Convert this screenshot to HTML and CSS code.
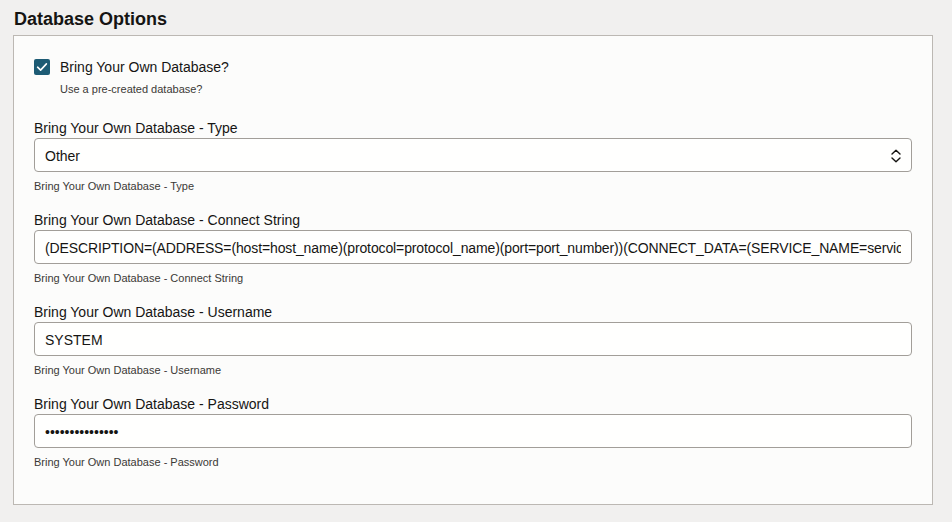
FILE: index.html
```html
<!DOCTYPE html>
<html lang="en">
<head>
<meta charset="utf-8">
<title>Database Options</title>
<link rel="stylesheet" href="styles.css">
</head>
<body>
<h2 class="title">Database Options</h2>
<div class="panel">
  <div class="check-row">
    <span class="checkbox">
      <svg width="16" height="16" viewBox="0 0 16 16"><path d="M3.6 8.2 L6.6 11.1 L12.4 4.9" fill="none" stroke="#fff" stroke-width="1.6" stroke-linecap="round" stroke-linejoin="round"/></svg>
    </span>
    <span class="check-label">Bring Your Own Database?</span>
  </div>
  <div class="check-help">Use a pre-created database?</div>

  <div class="field">
    <label class="field-label">Bring Your Own Database - Type</label>
    <div class="select">
      <span>Other</span>
      <svg class="chev" width="12" height="16" viewBox="0 0 12 16"><path d="M2 6 L6 2.2 L10 6 M2 10 L6 13.8 L10 10" fill="none" stroke="#161513" stroke-width="1.4" stroke-linecap="round" stroke-linejoin="round"/></svg>
    </div>
    <div class="help">Bring Your Own Database - Type</div>
  </div>

  <div class="field">
    <label class="field-label">Bring Your Own Database - Connect String</label>
    <input class="input tight" type="text" readonly value="(DESCRIPTION=(ADDRESS=(host=host_name)(protocol=protocol_name)(port=port_number))(CONNECT_DATA=(SERVICE_NAME=service_name)))">
    <div class="help">Bring Your Own Database - Connect String</div>
  </div>

  <div class="field">
    <label class="field-label">Bring Your Own Database - Username</label>
    <input class="input" type="text" readonly value="SYSTEM">
    <div class="help">Bring Your Own Database - Username</div>
  </div>

  <div class="field">
    <label class="field-label">Bring Your Own Database - Password</label>
    <input class="input" type="password" readonly value="xxxxxxxxxxxxxxx">
    <div class="help">Bring Your Own Database - Password</div>
  </div>
</div>
</body>
</html>
```
FILE: styles.css
```css
html, body {
  margin: 0;
  padding: 0;
  background: #f1f0ef;
  font-family: "Liberation Sans", Arial, sans-serif;
  color: #161513;
}
body {
  padding: 0 19px 0 13px;
}
.title {
  margin: 8px 0 5px 1px;
  font-size: 18px;
  line-height: 22px;
  font-weight: bold;
}
.panel {
  background: #fcfcfb;
  border: 1px solid #bcb8b3;
  padding: 21px 20px 35px 20px;
}
.check-row {
  display: flex;
  align-items: center;
  height: 20px;
  gap: 10px;
}
.checkbox {
  width: 16px;
  height: 16px;
  border-radius: 2px;
  background: #1d5b74;
  display: flex;
}
.check-label {
  font-size: 14px;
}
.check-help {
  margin: 5px 0 0 26px;
  font-size: 11px;
  line-height: 14px;
  color: #3b3936;
}
.field {
  margin-top: 24px;
}
.field + .field {
  margin-top: 19px;
}
.field-label {
  display: block;
  font-size: 14px;
  line-height: 17px;
  margin-bottom: 1px;
}
.select, .input {
  box-sizing: border-box;
  width: 100%;
  height: 34px;
  border: 1px solid #a29e99;
  border-radius: 4px;
  background: #fffffe;
  font-family: "Liberation Sans", Arial, sans-serif;
  font-size: 14px;
  color: #161513;
  padding: 1px 10px 0 10px;
  display: flex;
  align-items: center;
  outline: none;
}
.tight {
  letter-spacing: -0.12px;
}
.select {
  justify-content: space-between;
}
.chev {
  margin-right: -1px;
}
.help {
  margin-top: 7px;
  font-size: 11px;
  line-height: 14px;
  color: #3b3936;
}
```
